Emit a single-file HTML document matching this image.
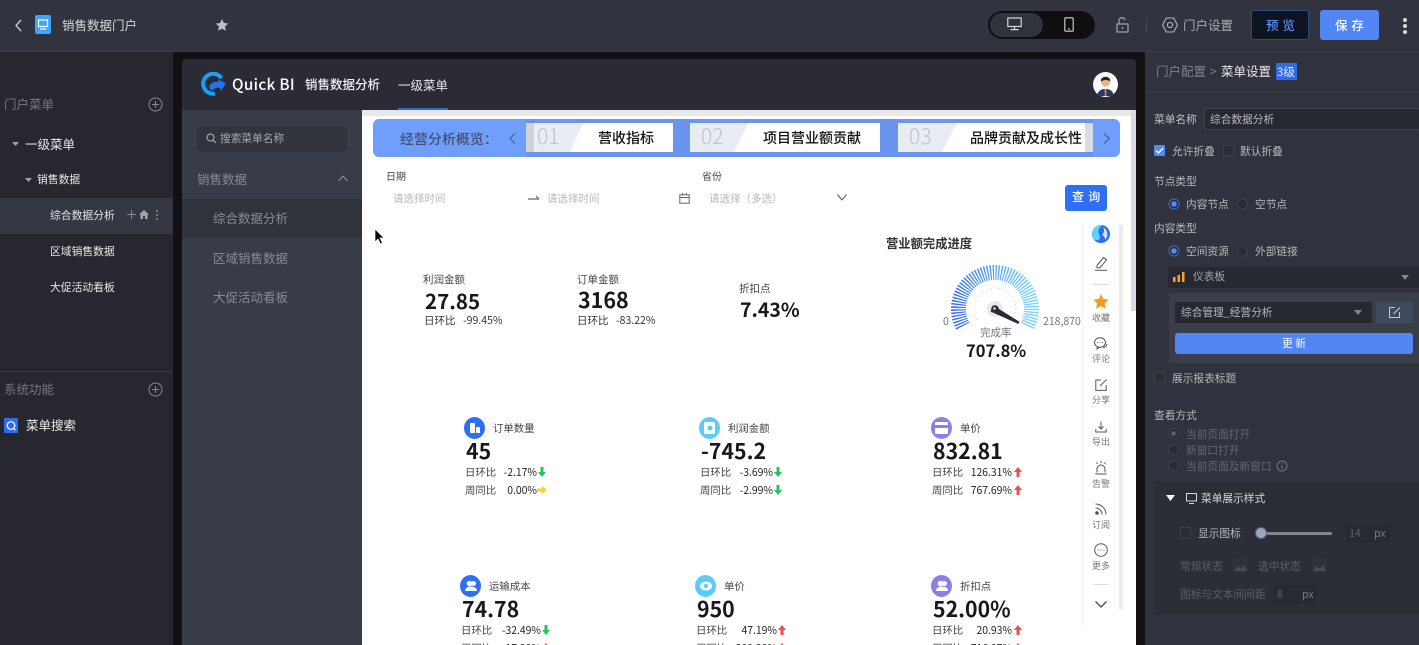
<!DOCTYPE html>
<html lang="zh">
<head>
<meta charset="utf-8">
<title>销售数据门户</title>
<style>
html,body{margin:0;padding:0;width:1419px;height:645px;overflow:hidden;background:#111113}
body{position:relative;font-family:"Noto Sans CJK SC","Liberation Sans",sans-serif}
.b{position:absolute}
.t{position:absolute;white-space:nowrap;line-height:20px;height:20px;font-size:11px}
svg{position:absolute;overflow:visible}
.n{font-weight:700;color:#16181d;font-size:21.3px}
.l{color:#444;font-size:10.4px}
.c{color:#444;font-size:10.4px}
.v{color:#222;font-size:10.4px;text-align:right;width:60px}
.s{color:#777;font-size:9px;width:30px;text-align:center;left:1086px}
.ic{position:absolute;width:21px;height:22px;border-radius:50%}
</style>
</head>
<body>
<!-- top bar -->
<div class="b" style="left:0;top:0;width:1419px;height:51px;background:#31343e;border-bottom:1px solid #3a3d47;box-sizing:content-box"></div>
<svg style="left:14px;top:19px" width="9" height="13" fill="none" stroke="#c8c9cc" stroke-width="1.4"><path d="M7 1L2 6.500L7 12"/></svg>
<div class="b" style="left:35px;top:15px;width:16px;height:19px;background:#3ea6f8;border-radius:2px"></div>
<svg style="left:37px;top:19px" width="12" height="12" fill="none" stroke="#fff" stroke-width="1.2"><rect x="1.500" y="1" width="9" height="6.500"/><path d="M3 10h6"/></svg>
<div class="t" style="left:62px;top:15px;font-size:12.500px;color:#d8d9dc">销售数据门户</div>
<svg style="left:215px;top:18px" width="14" height="14"><path d="M7 1l1.900 4 4.300.5-3.200 3 .9 4.300L7 10.600 3.100 12.800l.9-4.300-3.200-3 4.300-.5z" fill="#bfc0c4"/></svg>
<div class="b" style="left:988px;top:11px;width:107px;height:28px;background:#0f0f11;border-radius:14px"></div>
<div class="b" style="left:990px;top:13px;width:53px;height:24px;background:#30333c;border-radius:12px"></div>
<svg style="left:1007px;top:17px" width="15" height="14" fill="none" stroke="#d6d7da" stroke-width="1.2"><rect x=".8" y="1" width="13.400" height="8.500"/><path d="M7.500 9.500v3M3.500 12.600h8"/></svg>
<svg style="left:1064px;top:17px" width="10" height="15" fill="none" stroke="#d6d7da" stroke-width="1.100"><rect x=".8" y=".8" width="8.400" height="13.400" rx="1"/><path d="M4 12h2"/></svg>
<svg style="left:1116px;top:17px" width="13" height="16" fill="none" stroke="#a5a7ac" stroke-width="1.200"><rect x="1" y="7" width="11" height="8"/><path d="M3 7V3.500a3 2.500 0 0 1 6 -.5M6.500 10v2"/></svg>
<div class="b" style="left:1146px;top:18px;width:1px;height:14px;background:#484b55"></div>
<svg style="left:1162px;top:17px" width="16" height="16" fill="none" stroke="#b4b5b9" stroke-width="1.100"><path d="M4.300 1h7.400L15.400 8l-3.700 7H4.300L.6 8z"/><circle cx="8" cy="8" r="2.600"/></svg>
<div class="t" style="left:1183px;top:15px;font-size:12.500px;color:#a9abb0">门户设置</div>
<div class="b" style="left:1251px;top:10px;width:58px;height:30px;box-sizing:border-box;background:#0d1421;border:1px solid #2d4a7f;border-radius:3px"></div>
<div class="t" style="left:1266px;top:15px;font-size:12.500px;color:#5b8ff9;font-weight:500;letter-spacing:.5px">预 览</div>
<div class="b" style="left:1320px;top:10px;width:59px;height:30px;background:#5286f5;border-radius:3px"></div>
<div class="t" style="left:1335px;top:15px;font-size:12.500px;color:#fff;font-weight:500;letter-spacing:.5px">保 存</div>
<div class="b" style="left:1403px;top:18px;width:4px;height:4px;border-radius:50%;background:#d7d8db"></div>
<div class="b" style="left:1403px;top:24px;width:4px;height:4px;border-radius:50%;background:#d7d8db"></div>
<div class="b" style="left:1403px;top:30px;width:4px;height:4px;border-radius:50%;background:#d7d8db"></div>

<!-- left sidebar -->
<div class="b" style="left:0;top:52px;width:173px;height:593px;background:#27272f"></div>
<div class="t" style="left:4px;top:94px;font-size:12.500px;color:#77787d">门户菜单</div>
<svg style="left:148px;top:97px" width="15" height="15" fill="none" stroke="#87888c" stroke-width="1"><circle cx="7.500" cy="7.500" r="6.500"/><path d="M7.500 4v7M4 7.500h7"/></svg>
<svg style="left:12px;top:142px" width="7" height="4"><path d="M0 0h7L3.500 4z" fill="#a0a1a5"/></svg>
<div class="t" style="left:25px;top:134px;font-size:12.500px;color:#e8e8ea">一级菜单</div>
<svg style="left:25px;top:178px" width="7" height="4"><path d="M0 0h7L3.500 4z" fill="#a0a1a5"/></svg>
<div class="t" style="left:37px;top:169px;font-size:10.800px;color:#e8e8ea">销售数据</div>
<div class="b" style="left:0;top:198px;width:173px;height:36px;background:#353842"></div>
<div class="t" style="left:50px;top:205px;font-size:10.800px;color:#e2e3e5">综合数据分析</div>
<svg style="left:127px;top:210px" width="9" height="9" stroke="#888a90" stroke-width="1"><path d="M4.500 0v9M0 4.500h9"/></svg>
<svg style="left:139px;top:210px" width="10" height="9"><path d="M5 0L10 4.500H8.500V9H6V6H4v3H1.500V4.500H0z" fill="#a5a6aa"/></svg>
<div class="b" style="left:156px;top:210px;width:2px;height:2px;background:#777"></div>
<div class="b" style="left:156px;top:214px;width:2px;height:2px;background:#777"></div>
<div class="b" style="left:156px;top:218px;width:2px;height:2px;background:#777"></div>
<div class="t" style="left:50px;top:241px;font-size:10.800px;color:#e8e8ea">区域销售数据</div>
<div class="t" style="left:50px;top:277px;font-size:10.800px;color:#e8e8ea">大促活动看板</div>
<div class="b" style="left:0;top:371px;width:173px;height:1px;background:#3a3b44"></div>
<div class="t" style="left:4px;top:379px;font-size:12.500px;color:#77787d">系统功能</div>
<svg style="left:148px;top:382px" width="15" height="15" fill="none" stroke="#87888c" stroke-width="1"><circle cx="7.500" cy="7.500" r="6.500"/><path d="M7.500 4v7M4 7.500h7"/></svg>
<div class="b" style="left:4px;top:418px;width:14px;height:15px;background:#2f6df0"></div>
<svg style="left:4px;top:418px" width="14" height="15" fill="none" stroke="#fff" stroke-width="1.200"><circle cx="7" cy="7.500" r="3.800"/><path d="M9.500 10.500l2 1.500"/></svg>
<div class="t" style="left:26px;top:415px;font-size:12.500px;color:#eee">菜单搜索</div>

<!-- inner portal -->
<div class="b" style="left:182px;top:59px;width:954px;height:52px;background:#2a2b34;border-radius:4px 4px 0 0"></div>
<svg style="left:200px;top:72px" width="27" height="25" fill="none"><path d="M21.500 6.200A10 10 0 1 0 15 21.600" stroke="#18a0f6" stroke-width="4"/><path d="M9 14.500c2-4 6-5.500 10-4.500l-1-2.500 8 3.500-5 8-.8-3c-3-.8-6 0-8 2.500C10.500 18 9.500 16.500 9 14.500z" fill="#2373ef"/></svg>
<div class="t" style="left:232px;top:74px;font-size:15.300px;color:#fff;font-weight:500;letter-spacing:.3px">Quick BI</div>
<div class="t" style="left:305px;top:74px;font-size:12.500px;color:#f0f0f2;font-weight:500">销售数据分析</div>
<div class="t" style="left:398px;top:75px;font-size:12.500px;color:#e8e8ea">一级菜单</div>
<div class="b" style="left:398px;top:108px;width:50px;height:2px;background:#2e6be6"></div>
<div class="b" style="left:1093px;top:72px;width:25px;height:25px;border-radius:50%;background:#fff;overflow:hidden"></div>
<svg style="left:1093px;top:72px" width="25" height="25"><path d="M4 24c1-6 5-7 8.500-7s7.500 1 8.500 7z" fill="#25386b"/><path d="M11.500 17h2l-.3 7h-1.400z" fill="#e88a2a"/><circle cx="12.500" cy="10" r="4.600" fill="#e8b590"/><path d="M7.800 9.500c-.5-6 9.900-6.500 9.500 0-2-2-6.500-2-9.500 0z" fill="#2b2320"/></svg>
<div class="b" style="left:182px;top:110px;width:180px;height:535px;background:#383c47"></div>
<div class="b" style="left:197px;top:126px;width:150px;height:26px;background:#31343d;border-radius:3px"></div>
<svg style="left:206px;top:133px" width="11" height="11" fill="none" stroke="#b5b6ba" stroke-width="1"><circle cx="4.500" cy="4.500" r="3.500"/><path d="M7 7l3 3"/></svg>
<div class="t" style="left:220px;top:129px;font-size:10.700px;color:#a9aaae">搜索菜单名称</div>
<div class="t" style="left:197px;top:169px;font-size:12.500px;color:#8a8c92">销售数据</div>
<svg style="left:338px;top:175px" width="10" height="7" fill="none" stroke="#94959a" stroke-width="1"><path d="M.5 6L5 1l4.500 5"/></svg>
<div class="b" style="left:182px;top:199px;width:180px;height:39px;background:#30333c"></div>
<div class="t" style="left:213px;top:208px;font-size:12.500px;color:#8a8c92">综合数据分析</div>
<div class="t" style="left:213px;top:248px;font-size:12.500px;color:#8a8c92">区域销售数据</div>
<div class="t" style="left:213px;top:287px;font-size:12.500px;color:#8a8c92">大促活动看板</div>

<!-- content -->
<div class="b" style="left:362px;top:110px;width:774px;height:535px;background:#fff"></div>
<div class="b" style="left:362px;top:110px;width:774px;height:6px;background:#e8e8e9"></div>
<div class="b" style="left:1131px;top:110px;width:5px;height:201px;background:#d8dae0"></div>

<!-- banner -->
<div class="b" style="left:373px;top:119px;width:747px;height:38px;background:#709efc;border-radius:6px"></div>
<div class="b" style="left:526px;top:119px;width:567px;height:38px;background:#6b94ee"></div>
<div class="t" style="left:400px;top:128px;font-size:13.800px;color:#454f6c;font-weight:500;letter-spacing:.2px">经营分析概览：</div>
<svg style="left:509px;top:133px" width="7" height="11" fill="none" stroke="#47618f" stroke-width="1.200"><path d="M6 .5L1 5.500l5 5"/></svg>
<svg style="left:1103px;top:133px" width="7" height="11" fill="none" stroke="#47618f" stroke-width="1.200"><path d="M1 .5l5 5-5 5"/></svg>
<div class="b" style="left:526px;top:123px;width:147px;height:29px;background:#fff"></div>
<svg style="left:526px;top:123px" width="60" height="29"><path d="M0 0H57L44 29H0z" fill="#e8edf4"/><rect width="8" height="29" fill="#cfd2d8"/></svg>
<div class="t" style="left:537px;top:126px;font-size:21px;color:#c0c2c5;font-weight:300">01</div>
<div class="t" style="left:598px;top:128px;font-size:14px;color:#111;font-weight:500">营收指标</div>
<div class="b" style="left:690px;top:123px;width:190px;height:29px;background:#fff"></div>
<svg style="left:690px;top:123px" width="60" height="29"><path d="M0 0H58L44 29H0z" fill="#e8edf4"/></svg>
<div class="t" style="left:701px;top:126px;font-size:21px;color:#c0c2c5;font-weight:300">02</div>
<div class="t" style="left:763px;top:128px;font-size:14px;color:#111;font-weight:500">项目营业额贡献</div>
<div class="b" style="left:898px;top:123px;width:187px;height:29px;background:#fff"></div>
<div class="b" style="left:1085px;top:123px;width:8px;height:29px;background:#d9dce2"></div>
<svg style="left:898px;top:123px" width="60" height="29"><path d="M0 0H59L44 29H0z" fill="#e8edf4"/></svg>
<div class="t" style="left:909px;top:126px;font-size:21px;color:#c0c2c5;font-weight:300">03</div>
<div class="t" style="left:970px;top:128px;font-size:14px;color:#111;font-weight:500">品牌贡献及成长性</div>

<!-- filters -->
<div class="t" style="left:386px;top:166px;font-size:10px;color:#444">日期</div>
<div class="t" style="left:393px;top:189px;font-size:10.500px;color:#b8b8b8">请选择时间</div>
<svg style="left:528px;top:195px" width="12" height="6" fill="none" stroke="#666" stroke-width="1.200"><path d="M0 4h11M8 1l3 3"/></svg>
<div class="t" style="left:547px;top:189px;font-size:10.500px;color:#b8b8b8">请选择时间</div>
<svg style="left:679px;top:193px" width="11" height="11" fill="none" stroke="#666" stroke-width="1"><rect x=".8" y="1.800" width="9.400" height="8.400"/><path d="M.8 4.500h9.400M3.500 0v2M7.500 0v2"/></svg>
<div class="t" style="left:702px;top:166px;font-size:10px;color:#444">省份</div>
<div class="t" style="left:709px;top:189px;font-size:10.500px;color:#b8b8b8">请选择（多选）</div>
<svg style="left:837px;top:194px" width="10" height="7" fill="none" stroke="#555" stroke-width="1"><path d="M.5.500L5 6l4.500-5.500"/></svg>
<div class="b" style="left:1065px;top:185px;width:42px;height:26px;background:#2e6ff5;border-radius:3px"></div>
<div class="t" style="left:1072px;top:187px;font-size:12px;color:#fff;font-weight:500;letter-spacing:.8px">查 询</div>

<!-- KPI row 1 -->
<div class="t" style="left:423px;top:270px;font-size:10.500px;color:#444">利润金额</div>
<div class="t n" style="left:425px;top:290px;font-size:20.500px">27.85</div>
<div class="t" style="left:424px;top:311px;font-size:10.500px;color:#333">日环比</div>
<div class="t" style="left:463px;top:311px;font-size:10.500px;color:#333">-99.45%</div>
<div class="t" style="left:577px;top:270px;font-size:10.500px;color:#444">订单金额</div>
<div class="t n" style="left:578px;top:290px;font-size:21.500px">3168</div>
<div class="t" style="left:577px;top:311px;font-size:10.500px;color:#333">日环比</div>
<div class="t" style="left:616px;top:311px;font-size:10.500px;color:#333">-83.22%</div>
<div class="t" style="left:739px;top:279px;font-size:10.500px;color:#444">折扣点</div>
<div class="t n" style="left:740px;top:299px;font-size:19.500px">7.43%</div>

<!-- gauge -->
<div class="t" style="left:886px;top:233px;font-size:12.300px;color:#333;font-weight:700">营业额完成进度</div>
<svg style="left:940px;top:255px" width="110" height="90" viewBox="940 255 110 90" fill="none">
<defs><linearGradient id="g" gradientUnits="userSpaceOnUse" x1="951" y1="300" x2="1039" y2="300"><stop offset="0" stop-color="#2f66f2"/><stop offset=".5" stop-color="#57a3f8"/><stop offset="1" stop-color="#7bdcfb"/></linearGradient></defs>
<path d="M962.800 326.100A36.500 36.500 0 1 1 1027.200 326.100" stroke="url(#g)" stroke-width="15" stroke-dasharray="1.300 1.400"/>
<path d="M977 320A21 21 0 1 1 1013 320" stroke="#c9c9c9" stroke-width="1" stroke-dasharray="1 3"/>
<circle cx="995" cy="309" r="8" fill="#e8e8e8"/>
<path d="M993 305.300L1019.500 321.800L1018.300 324L990.500 311.500z" fill="#2a2d35"/>
<circle cx="995" cy="309" r="3.800" fill="#2a2d35"/><circle cx="994.500" cy="308.500" r="1.200" fill="#fff"/>
</svg>
<div class="t" style="left:943px;top:312px;font-size:10.500px;color:#777">0</div>
<div class="t" style="left:1043px;top:312px;font-size:10.500px;color:#777">218,870</div>
<div class="t" style="left:980px;top:323px;font-size:10.500px;color:#777">完成率</div>
<div class="t n" style="left:966px;top:340px;font-size:16.500px">707.8%</div>

<!-- toolbar -->
<div class="b" style="left:1082px;top:225px;width:0;height:405px;border-left:1px dotted #eee"></div>
<div class="b" style="left:1119px;top:225px;width:4px;height:385px;background:#ececed"></div>
<svg style="left:1092px;top:225px" width="18" height="18"><circle cx="9" cy="9" r="9" fill="#2a6df0"/><path d="M9 0A9 9 0 0 0 2 14.500C8 17 9 13 7 9 5.500 6 7 2 11 .3A9 9 0 0 0 9 0z" fill="#5fd3f5"/><path d="M11 2c2 3 1 6-1 8 2 1 3 2 3 5 3-3 4-9-2-13z" fill="#fff" opacity=".8"/></svg>
<svg style="left:1094px;top:256px" width="14" height="15" fill="none" stroke="#555" stroke-width="1"><path d="M3 9.500L9.500 1.500l3 2.300-6.500 8H3zM1 14.200h12"/></svg>
<div class="b" style="left:1093px;top:284px;width:16px;height:1px;background:#ddd"></div>
<svg style="left:1093px;top:294px" width="16" height="15"><path d="M8 0l2.300 5 5.500.6-4 3.800 1.100 5.400L8 12.100 3.100 14.800l1.100-5.400-4-3.800L5.700 5z" fill="#f59a23"/></svg>
<div class="t s" style="top:308px">收藏</div>
<svg style="left:1094px;top:337px" width="14" height="13" fill="none" stroke="#555" stroke-width="1"><ellipse cx="6" cy="5.500" rx="5.500" ry="4.800"/><path d="M9 10.500a4 4 0 0 0 4-3.500M3.500 9.500L3 12l3-2"/><path d="M3.500 5.500h.8M5.700 5.500h.8M8 5.500h.8"/></svg>
<div class="t s" style="top:349px">评论</div>
<svg style="left:1095px;top:379px" width="12" height="12" fill="none" stroke="#555" stroke-width="1"><path d="M6 1H.8v10.400h10.400V6M5 7l6.500-6.500"/></svg>
<div class="t s" style="top:390px">分享</div>
<svg style="left:1095px;top:421px" width="12" height="12" fill="none" stroke="#555" stroke-width="1"><path d="M6 .5v7M3.500 5.500L6 8l2.500-2.500M.8 8v3h10.400V8"/></svg>
<div class="t s" style="top:432px">导出</div>
<svg style="left:1095px;top:461px" width="12" height="14" fill="none" stroke="#555" stroke-width="1"><path d="M2 11.500V8a4 4 0 0 1 8 0v3.500M.5 13h11M6 0v2M1.500 1.500l1 1.500M10.500 1.500l-1 1.500"/></svg>
<div class="t s" style="top:474px">告警</div>
<svg style="left:1095px;top:503px" width="12" height="12" fill="none" stroke="#555" stroke-width="1"><path d="M.5 1A10.500 10.500 0 0 1 11 11.500M.5 5A6.500 6.500 0 0 1 7 11.500"/><circle cx="2" cy="10" r="1.300" fill="#555"/></svg>
<div class="t s" style="top:515px">订阅</div>
<svg style="left:1094px;top:543px" width="14" height="14" fill="none" stroke="#555" stroke-width="1"><circle cx="7" cy="7" r="6.300"/><path d="M3.500 7h1M6.500 7h1M9.500 7h1"/></svg>
<div class="t s" style="top:556px">更多</div>
<div class="b" style="left:1093px;top:584px;width:16px;height:1px;background:#ddd"></div>
<svg style="left:1095px;top:601px" width="12" height="7" fill="none" stroke="#444" stroke-width="1.300"><path d="M.5.500L6 6l5.500-5.500"/></svg>

<!-- KPI row 2 -->
<div class="ic" style="left:464px;top:417px;background:#2f6ff5"></div>
<svg style="left:469px;top:422px" width="12" height="12"><path d="M1 1h5v10H1zM7 5h4v6H7z" fill="#fff"/></svg>
<div class="t l" style="left:493px;top:418px">订单数量</div>
<div class="t n" style="left:466px;top:441px">45</div>
<div class="t c" style="left:465px;top:462px">日环比</div><div class="t v" style="left:477px;top:462px">-2.17%</div>
<svg style="left:538px;top:467px" width="8" height="10"><path d="M2.500 0h3v5H8L4 10 0 5h2.500z" fill="#22c55e"/></svg>
<div class="t c" style="left:465px;top:480px">周同比</div><div class="t v" style="left:477px;top:480px">0.00%</div>
<svg style="left:537px;top:486px" width="10" height="8"><path d="M0 2.500h5V0l5 4-5 4V5.500H0z" fill="#f7d038"/></svg>

<div class="ic" style="left:699px;top:417px;background:#5bcbf9"></div>
<svg style="left:704px;top:422px" width="11" height="12"><rect width="11" height="12" fill="#fff" rx="1"/><circle cx="6" cy="6" r="2.500" fill="#5bcbf9"/></svg>
<div class="t l" style="left:728px;top:418px">利润金额</div>
<div class="t n" style="left:701px;top:441px">-745.2</div>
<div class="t c" style="left:700px;top:462px">日环比</div><div class="t v" style="left:713px;top:462px">-3.69%</div>
<svg style="left:774px;top:467px" width="8" height="10"><path d="M2.500 0h3v5H8L4 10 0 5h2.500z" fill="#22c55e"/></svg>
<div class="t c" style="left:700px;top:480px">周同比</div><div class="t v" style="left:713px;top:480px">-2.99%</div>
<svg style="left:774px;top:485px" width="8" height="10"><path d="M2.500 0h3v5H8L4 10 0 5h2.500z" fill="#22c55e"/></svg>

<div class="ic" style="left:931px;top:417px;background:#8a80ec"></div>
<svg style="left:935px;top:422px" width="13" height="12"><rect width="13" height="12" fill="#fff" rx="1"/><rect y="3" width="13" height="3" fill="#8a80ec"/></svg>
<div class="t l" style="left:960px;top:418px">单价</div>
<div class="t n" style="left:933px;top:441px">832.81</div>
<div class="t c" style="left:932px;top:462px">日环比</div><div class="t v" style="left:952px;top:462px">126.31%</div>
<svg style="left:1014px;top:467px" width="8" height="10"><path d="M2.500 10h3V5H8L4 0 0 5h2.500z" fill="#f44c4c"/></svg>
<div class="t c" style="left:932px;top:480px">周同比</div><div class="t v" style="left:952px;top:480px">767.69%</div>
<svg style="left:1014px;top:485px" width="8" height="10"><path d="M2.500 10h3V5H8L4 0 0 5h2.500z" fill="#f44c4c"/></svg>

<!-- KPI row 3 -->
<div class="ic" style="left:460px;top:575px;background:#2f6ff5"></div>
<svg style="left:465px;top:580px" width="12" height="12"><circle cx="4.500" cy="3.500" r="2.800" fill="#fff"/><circle cx="8.500" cy="3.500" r="2.500" fill="#fff"/><path d="M0 11c0-6 12-6 12 0z" fill="#fff"/></svg>
<div class="t l" style="left:489px;top:576px">运输成本</div>
<div class="t n" style="left:462px;top:599px">74.78</div>
<div class="t c" style="left:461px;top:620px">日环比</div><div class="t v" style="left:481px;top:620px">-32.49%</div>
<svg style="left:542px;top:625px" width="8" height="10"><path d="M2.500 0h3v5H8L4 10 0 5h2.500z" fill="#22c55e"/></svg>
<div class="t c" style="left:461px;top:638px">周同比</div><div class="t v" style="left:481px;top:638px">-17.30%</div>
<svg style="left:542px;top:643px" width="8" height="10"><path d="M2.500 10h3V5H8L4 0 0 5h2.500z" fill="#f44c4c"/></svg>

<div class="ic" style="left:695px;top:575px;background:#5bcbf9"></div>
<svg style="left:700px;top:581px" width="12" height="10"><ellipse cx="6" cy="5" rx="6" ry="4.500" fill="#fff"/><circle cx="6" cy="5" r="2.200" fill="#5bcbf9"/></svg>
<div class="t l" style="left:724px;top:576px">单价</div>
<div class="t n" style="left:697px;top:599px">950</div>
<div class="t c" style="left:696px;top:620px">日环比</div><div class="t v" style="left:717px;top:620px">47.19%</div>
<svg style="left:778px;top:625px" width="8" height="10"><path d="M2.500 10h3V5H8L4 0 0 5h2.500z" fill="#f44c4c"/></svg>
<div class="t c" style="left:696px;top:638px">周同比</div><div class="t v" style="left:717px;top:638px">209.38%</div>
<svg style="left:778px;top:643px" width="8" height="10"><path d="M2.500 10h3V5H8L4 0 0 5h2.500z" fill="#f44c4c"/></svg>

<div class="ic" style="left:931px;top:575px;background:#8a80ec"></div>
<svg style="left:936px;top:580px" width="12" height="12"><circle cx="4.500" cy="3.500" r="2.800" fill="#fff"/><circle cx="8.500" cy="3.500" r="2.500" fill="#fff"/><path d="M0 11c0-6 12-6 12 0z" fill="#fff"/></svg>
<div class="t l" style="left:960px;top:576px">折扣点</div>
<div class="t n" style="left:933px;top:599px">52.00%</div>
<div class="t c" style="left:932px;top:620px">日环比</div><div class="t v" style="left:952px;top:620px">20.93%</div>
<svg style="left:1014px;top:625px" width="8" height="10"><path d="M2.500 10h3V5H8L4 0 0 5h2.500z" fill="#f44c4c"/></svg>
<div class="t c" style="left:932px;top:638px">周同比</div><div class="t v" style="left:952px;top:638px">716.07%</div>
<svg style="left:1014px;top:643px" width="8" height="10"><path d="M2.500 10h3V5H8L4 0 0 5h2.500z" fill="#f44c4c"/></svg>

<!-- cursor -->
<svg style="left:374px;top:228px" width="12" height="18"><path d="M1 1v13l3-3 2.500 5 2-1L6 10h4z" fill="#000" stroke="#fff" stroke-width=".7"/></svg>

<!-- right panel -->
<div class="b" style="left:1145px;top:52px;width:274px;height:593px;background:#30333d"></div>
<div class="b" style="left:1145px;top:92px;width:274px;height:1px;background:#3b3e48"></div>
<div class="t" style="left:1156px;top:61px;font-size:12.500px;color:#80828a">门户配置 <span style="margin-left:1px">&gt;</span></div>
<div class="t" style="left:1221px;top:61px;font-size:12.500px;color:#e8e8ea">菜单设置</div>
<div class="b" style="left:1276px;top:63px;width:21px;height:17px;background:#2e6be6"></div>
<div class="t" style="left:1277px;top:62px;font-size:11.500px;color:#e8eefc">3级</div>

<div class="t" style="left:1154px;top:110px;font-size:10.700px;color:#c0c1c5">菜单名称</div>
<div class="b" style="left:1204px;top:108px;width:216px;height:22px;box-sizing:border-box;background:#272932;border:1px solid #41444e;border-radius:2px"></div>
<div class="t" style="left:1210px;top:110px;font-size:10.700px;color:#b8b9bd">综合数据分析</div>

<div class="b" style="left:1154px;top:145px;width:11px;height:11px;background:#4f8bf9;border-radius:1px"></div>
<svg style="left:1155px;top:146px" width="9" height="9" fill="none" stroke="#fff" stroke-width="1.400"><path d="M1 4.500L3.500 7 8 2"/></svg>
<div class="t" style="left:1172px;top:142px;font-size:10.700px;color:#b8b9bd">允许折叠</div>
<div class="b" style="left:1223px;top:145px;width:11px;height:11px;box-sizing:border-box;background:#2b2d35;border:1px solid #3e414a"></div>
<div class="t" style="left:1240px;top:142px;font-size:10.700px;color:#b8b9bd">默认折叠</div>

<div class="t" style="left:1154px;top:172px;font-size:10.700px;color:#b8b9bd">节点类型</div>
<svg style="left:1168px;top:198px" width="12" height="12"><circle cx="6" cy="6" r="5" fill="#2a2c34" stroke="#3f6fc9"/><circle cx="6" cy="6" r="2.800" fill="#4f8bf9"/></svg>
<div class="t" style="left:1186px;top:195px;font-size:10.700px;color:#b8b9bd">内容节点</div>
<svg style="left:1237px;top:198px" width="12" height="12"><circle cx="5.500" cy="6" r="5" fill="#2a2c34" stroke="#3e414a"/></svg>
<div class="t" style="left:1255px;top:195px;font-size:10.700px;color:#b8b9bd">空节点</div>

<div class="t" style="left:1154px;top:219px;font-size:10.700px;color:#b8b9bd">内容类型</div>
<svg style="left:1168px;top:245px" width="12" height="12"><circle cx="6" cy="6" r="5" fill="#2a2c34" stroke="#3f6fc9"/><circle cx="6" cy="6" r="2.800" fill="#4f8bf9"/></svg>
<div class="t" style="left:1186px;top:242px;font-size:10.700px;color:#b8b9bd">空间资源</div>
<svg style="left:1237px;top:245px" width="12" height="12"><circle cx="5.500" cy="6" r="5" fill="#2a2c34" stroke="#3e414a"/></svg>
<div class="t" style="left:1255px;top:242px;font-size:10.700px;color:#b8b9bd">外部链接</div>

<div class="b" style="left:1168px;top:267px;width:251px;height:21px;background:#272932"></div>
<svg style="left:1173px;top:272px" width="12" height="10"><rect y="5" width="2.500" height="5" fill="#f5a623"/><rect x="4.500" y="3" width="2.500" height="7" fill="#f5a623"/><rect x="9" width="2.500" height="10" fill="#f5a623"/></svg>
<div class="t" style="left:1193px;top:267px;font-size:10.700px;color:#a8a9ad">仪表板</div>
<svg style="left:1401px;top:275px" width="8" height="5"><path d="M0 0h8L4 5z" fill="#84868c"/></svg>

<div class="b" style="left:1169px;top:293px;width:250px;height:70px;background:#3a3e49"></div>
<div class="b" style="left:1175px;top:302px;width:197px;height:21px;background:#272932"></div>
<div class="t" style="left:1181px;top:303px;font-size:10.700px;color:#b8b9bd">综合管理_经营分析</div>
<svg style="left:1354px;top:310px" width="8" height="5"><path d="M0 0h8L4 5z" fill="#84868c"/></svg>
<div class="b" style="left:1376px;top:302px;width:37px;height:21px;background:#404a5e"></div>
<svg style="left:1389px;top:307px" width="12" height="11" fill="none" stroke="#c8cad0" stroke-width="1"><path d="M6 .5H.5v10h10V5M4.500 7L11 .5"/></svg>
<div class="b" style="left:1175px;top:333px;width:238px;height:21px;background:#5286f5;border-radius:3px"></div>
<div class="t" style="left:1175px;top:334px;width:238px;text-align:center;font-size:10.700px;color:#fff">更 新</div>

<div class="b" style="left:1154px;top:372px;width:11px;height:11px;box-sizing:border-box;background:#2b2d35;border:1px solid #3e414a"></div>
<div class="t" style="left:1172px;top:369px;font-size:10.700px;color:#b8b9bd">展示报表标题</div>

<div class="t" style="left:1154px;top:406px;font-size:10.700px;color:#b8b9bd">查看方式</div>
<svg style="left:1168px;top:428px" width="12" height="12"><circle cx="5.500" cy="5.500" r="5" fill="#2a2c34" stroke="#3e414a"/><circle cx="5.500" cy="5.500" r="2.500" fill="#5c5e66"/></svg>
<div class="t" style="left:1186px;top:425px;font-size:10.700px;color:#666870">当前页面打开</div>
<svg style="left:1168px;top:444px" width="12" height="12"><circle cx="5.500" cy="5.500" r="5" fill="#2a2c34" stroke="#3e414a"/></svg>
<div class="t" style="left:1186px;top:441px;font-size:10.700px;color:#666870">新窗口打开</div>
<svg style="left:1168px;top:460px" width="12" height="12"><circle cx="5.500" cy="5.500" r="5" fill="#2a2c34" stroke="#3e414a"/></svg>
<div class="t" style="left:1186px;top:457px;font-size:10.700px;color:#666870">当前页面及新窗口</div>
<svg style="left:1276px;top:460px" width="12" height="12" fill="none" stroke="#777" stroke-width="1"><circle cx="6" cy="6" r="5"/><path d="M6 5v4M6 3v1"/></svg>

<div class="b" style="left:1154px;top:482px;width:265px;height:132px;background:#2c2e36"></div>
<svg style="left:1166px;top:495px" width="9" height="6"><path d="M0 0h9L4.500 6z" fill="#fff"/></svg>
<svg style="left:1186px;top:493px" width="11" height="11" fill="none" stroke="#d8d9dc" stroke-width="1"><rect x=".5" y=".5" width="10" height="7.500"/><path d="M3 10.500h5"/></svg>
<div class="t" style="left:1201px;top:489px;font-size:10.700px;color:#d8d9dc">菜单展示样式</div>
<div class="b" style="left:1180px;top:527px;width:11px;height:12px;box-sizing:border-box;background:#2a2c34;border:1px solid #3e414a"></div>
<div class="t" style="left:1198px;top:524px;font-size:10.700px;color:#b8b9bd">显示图标</div>
<div class="b" style="left:1256px;top:532px;width:76px;height:3px;background:#85868c;border-radius:2px"></div>
<div class="b" style="left:1255px;top:527px;width:12px;height:12px;box-sizing:border-box;background:#a3a5ab;border:1.500px solid #3e65b0;border-radius:50%"></div>
<div class="b" style="left:1346px;top:523px;width:44px;height:20px;background:#282a32;border-radius:2px"></div>
<div class="t" style="left:1349px;top:524px;font-size:10.700px;color:#606268">14</div>
<div class="t" style="left:1374px;top:524px;font-size:10.700px;color:#77797f">px</div>
<div class="t" style="left:1180px;top:557px;font-size:10.700px;color:#5e6067">常规状态</div>
<svg style="left:1233px;top:558px" width="15" height="15"><rect width="15" height="15" fill="#30323a"/><path d="M1 13l4-5 3 3 3-4 3 6z" fill="#4a4c54"/></svg>
<div class="t" style="left:1258px;top:557px;font-size:10.700px;color:#5e6067">选中状态</div>
<svg style="left:1312px;top:558px" width="15" height="15"><rect width="15" height="15" fill="#30323a"/><path d="M1 13l4-5 3 3 3-4 3 6z" fill="#4a4c54"/></svg>
<div class="t" style="left:1180px;top:585px;font-size:10.700px;color:#5e6067">图标与文本间间距</div>
<div class="b" style="left:1273px;top:585px;width:44px;height:19px;background:#282a32;border-radius:2px"></div>
<div class="t" style="left:1277px;top:585px;font-size:10.700px;color:#606268">8</div>
<div class="t" style="left:1302px;top:585px;font-size:10.700px;color:#77797f">px</div>
</body>
</html>
